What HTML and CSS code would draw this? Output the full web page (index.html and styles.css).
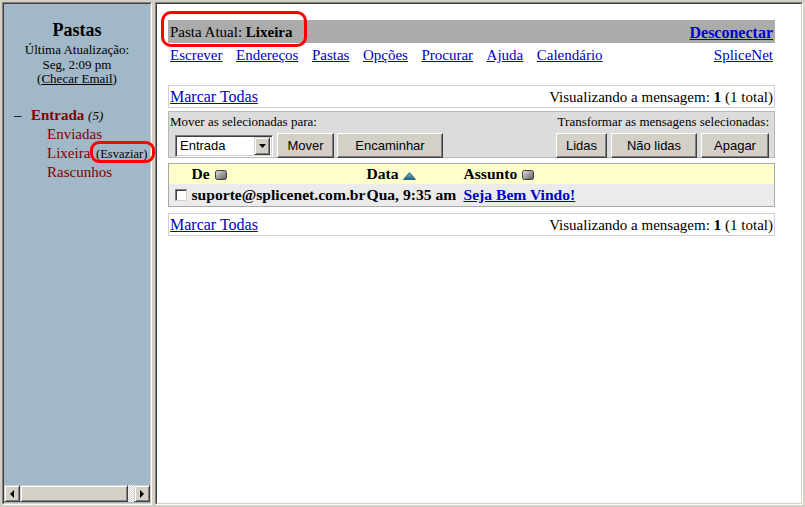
FILE: index.html
```html
<!DOCTYPE html>
<html lang="pt-BR">
<head>
<meta charset="utf-8">
<title>SquirrelMail - Lixeira</title>
<link rel="stylesheet" href="styles.css">
</head>
<body>
<div class="screen">
  <div class="frame left">
    <div class="frame-inner left-inner">
      <div class="left-body">
        <div class="left-head">
          <div class="title">Pastas</div>
          <div class="small">Última Atualização:</div>
          <div class="small">Seg, 2:09 pm</div>
          <div class="small">(<a class="plain-link" href="#">Checar Email</a>)</div>
        </div>
        <ul class="folders">
          <li class="folder inbox"><span class="dash">–</span><a class="folder-link strong" href="#">Entrada</a> <span class="count">(5)</span></li>
          <li class="folder sub"><a class="folder-link" href="#">Enviadas</a></li>
          <li class="folder sub"><a class="folder-link" href="#">Lixeira</a> <span class="small empty">(Esvaziar)</span></li>
          <li class="folder sub"><a class="folder-link" href="#">Rascunhos</a></li>
        </ul>
      </div>
      <div class="hscroll">
        <div class="sb-btn"><svg width="6" height="8" viewBox="0 0 6 8"><polygon points="5,0 5,8 1,4" fill="#000"/></svg></div>
        <div class="sb-thumb"></div>
        <div class="sb-track"></div>
        <div class="sb-btn"><svg width="6" height="8" viewBox="0 0 6 8"><polygon points="1,0 1,8 5,4" fill="#000"/></svg></div>
      </div>
    </div>
  </div>
  <div class="frame right">
    <div class="frame-inner right-inner">
      <div class="titlebar">
        <span>Pasta Atual: <b>Lixeira</b></span>
        <a class="logout" href="#">Desconectar</a>
      </div>
      <div class="nav">
        <div class="nav-links">
          <a href="#">Escrever</a>
          <a href="#">Endereços</a>
          <a href="#">Pastas</a>
          <a href="#">Opções</a>
          <a href="#">Procurar</a>
          <a href="#">Ajuda</a>
          <a href="#">Calendário</a>
        </div>
        <a href="#">SpliceNet</a>
      </div>

      <div class="box pager">
        <a class="mark-all" href="#">Marcar Todas</a>
        <span>Visualizando a mensagem: <b class="num">1</b> (1 total)</span>
      </div>

      <div class="box tools">
        <div class="tool-group">
          <div class="small tool-label">Mover as selecionadas para:</div>
          <div class="controls">
            <div class="select">
              <span class="select-text">Entrada</span>
              <span class="drop"><svg width="7" height="4" viewBox="0 0 7 4"><polygon points="0,0 7,0 3.5,4" fill="#000"/></svg></span>
            </div>
            <button class="btn btn-move">Mover</button>
            <button class="btn btn-fwd">Encaminhar</button>
          </div>
        </div>
        <div class="tool-group tool-right">
          <div class="small tool-label">Transformar as mensagens selecionadas:</div>
          <div class="controls">
            <button class="btn btn-read">Lidas</button>
            <button class="btn btn-unread">Não lidas</button>
            <button class="btn btn-del">Apagar</button>
          </div>
        </div>
      </div>

      <table class="msgs">
        <colgroup>
          <col class="c-check">
          <col class="c-from">
          <col class="c-date">
          <col>
        </colgroup>
        <tr class="head">
          <td></td>
          <td>De <svg class="ico" width="12" height="10" viewBox="0 0 12 10"><defs><linearGradient id="g1" x1="0" y1="0" x2="1" y2="1"><stop offset="0" stop-color="#e4e4e4"/><stop offset="1" stop-color="#5a5a5a"/></linearGradient></defs><rect x="0.5" y="0.5" width="11" height="9" rx="2" fill="url(#g1)" stroke="#3c3c3c"/></svg></td>
          <td>Data <svg class="ico" width="13" height="8" viewBox="0 0 13 8"><defs><linearGradient id="g2" x1="0" y1="0" x2="0" y2="1"><stop offset="0" stop-color="#7cc0d8"/><stop offset="1" stop-color="#21607e"/></linearGradient></defs><polygon points="6.5,0.5 12.5,7.5 0.5,7.5" fill="url(#g2)" stroke="#2a6680"/></svg></td>
          <td>Assunto <svg class="ico" width="12" height="10" viewBox="0 0 12 10"><rect x="0.5" y="0.5" width="11" height="9" rx="2" fill="url(#g1)" stroke="#3c3c3c"/></svg></td>
        </tr>
        <tr class="row">
          <td><span class="check"></span></td>
          <td>suporte@splicenet.com.br</td>
          <td>Qua, 9:35 am</td>
          <td><a href="#">Seja Bem Vindo!</a></td>
        </tr>
      </table>

      <div class="box pager pager-bottom">
        <a class="mark-all" href="#">Marcar Todas</a>
        <span>Visualizando a mensagem: <b class="num">1</b> (1 total)</span>
      </div>
    </div>
  </div>
</div>
<div class="mark mark-folder"></div>
<div class="mark mark-empty"></div>
</body>
</html>
```
FILE: styles.css
```css
* { box-sizing: border-box; }
html, body { margin: 0; padding: 0; }
body {
  width: 805px;
  height: 507px;
  overflow: hidden;
  position: relative;
  background: #d4d0c8;
  font-family: "Liberation Serif", "Times New Roman", serif;
  font-size: 15px;
  color: #000;
}
a { color: #0000cc; }

.screen {
  display: flex;
  gap: 3px;
  padding: 2px;
  height: 507px;
}
.frame {
  height: 503px;
  border: 1px solid;
  border-color: #808080 #ffffff #ffffff #808080;
}
.frame-inner {
  height: 100%;
  border: 1px solid;
  border-color: #404040 #d4d0c8 #d4d0c8 #404040;
}
.left { width: 150px; }
.right { width: 648px; }

/* ---------- left frame ---------- */
.left-inner {
  background: #a1b8c9;
  display: flex;
  flex-direction: column;
}
.left-body { flex: 1; padding-top: 14px; }
.left-head { text-align: center; }
.title { font-weight: bold; font-size: 18px; line-height: 24px; }
.small { font-size: 13px; line-height: 14.5px; }
.left-head .small:nth-child(2) { padding-top: 1px; }
.plain-link { color: #000; }

.folders {
  list-style: none;
  margin: 19px 0 0;
  padding: 0;
}
.folder { line-height: 18.6px; white-space: nowrap; }
.inbox { padding-left: 10px; }
.dash { display: inline-block; width: 17px; }
.sub { padding-left: 43px; }
.folder-link { color: #800000; text-decoration: none; }
.strong { font-weight: bold; }
.count { font-size: 13px; font-style: italic; }
.empty { line-height: 18.6px; font-size: 12.5px; margin-left: 2px; }

.hscroll {
  height: 17px;
  display: flex;
  margin-bottom: 1px;
}
.sb-btn {
  width: 16px;
  background: #d4d0c8;
  border: 1px solid;
  border-color: #d4d0c8 #404040 #404040 #d4d0c8;
  box-shadow: inset 1px 1px #fff, inset -1px -1px #808080;
  display: flex;
  align-items: center;
  justify-content: center;
}
.sb-thumb {
  width: 108px;
  background: #d4d0c8;
  border: 1px solid;
  border-color: #d4d0c8 #404040 #404040 #d4d0c8;
  box-shadow: inset 1px 1px #fff, inset -1px -1px #808080;
}
.sb-track {
  flex: 1;
  background: repeating-conic-gradient(#ffffff 0 25%, #d4d0c8 0 50%) 0 0 / 2px 2px;
}

/* ---------- right frame ---------- */
.right-inner {
  background: #fff;
  padding: 16px 26px 0 11px;
}
.titlebar {
  background: #ababab;
  height: 23px;
  line-height: 23px;
  padding: 1px 2px 0;
  display: flex;
  justify-content: space-between;
}
.logout { font-weight: bold; font-size: 16px; }
.nav {
  display: flex;
  justify-content: space-between;
  line-height: 20px;
  padding: 2px 2px 0;
}
.nav-links { display: flex; gap: 13.5px; }

.box {
  border: 1px solid #cfcfcf;
}
.pager {
  margin-top: 20px;
  height: 23px;
  line-height: 21px;
  padding: 0 1px;
  display: flex;
  justify-content: space-between;
}
.mark-all { font-size: 16px; }
.pager-bottom { margin-top: 6px; }
.num { font-size: 15.5px; }

.tools {
  margin-top: 3px;
  height: 47px;
  background: #dcdcdc;
  border-color: #b8b8b8;
  display: flex;
  justify-content: space-between;
  padding: 2px 5px 0 1px;
}
.tool-label { line-height: 16px; height: 17px; }
.tool-right { text-align: right; }
.controls {
  display: flex;
  align-items: center;
  gap: 3px;
  margin-top: 2px;
  height: 25px;
}
.tool-right .controls { justify-content: flex-end; gap: 4px; }

.select {
  margin-left: 5px;
  margin-right: 1px;
  width: 98px;
  height: 22px;
  background: #fff;
  border: 1px solid;
  border-color: #808080 #fff #fff #808080;
  box-shadow: inset 1px 1px #404040, inset -1px -1px #d4d0c8;
  display: flex;
  align-items: center;
  justify-content: space-between;
  padding: 2px 2px 2px 4px;
  font-family: "Liberation Sans", Arial, sans-serif;
  font-size: 13px;
}
.drop {
  width: 16px;
  height: 18px;
  background: #d4d0c8;
  border: 1px solid;
  border-color: #d4d0c8 #404040 #404040 #d4d0c8;
  box-shadow: inset 1px 1px #fff, inset -1px -1px #808080;
  display: flex;
  align-items: center;
  justify-content: center;
}

.btn {
  height: 25px;
  margin: 0;
  background: #d4d0c8;
  border: 1px solid;
  border-color: #fff #404040 #404040 #fff;
  box-shadow: inset -1px -1px #808080;
  font-family: "Liberation Sans", Arial, sans-serif;
  font-size: 13px;
  color: #000;
  padding: 0 9px;
}
.btn-move { width: 57px; }
.btn-fwd { width: 106px; }
.btn-read { width: 51px; }
.btn-unread { width: 86px; }
.btn-del { width: 68px; }

.msgs {
  margin-top: 5px;
  width: 100%;
  border-collapse: collapse;
  table-layout: fixed;
  border: 1px solid #a8a8a8;
  font-weight: bold;
  font-size: 15.6px;
  white-space: nowrap;
}
.c-check { width: 22px; }
.c-from { width: 175px; }
.c-date { width: 97px; }
.msgs td { padding: 0 0 0 1px; overflow: visible; }
.head td { background: #ffffcc; height: 20px; }
.row td { background: #ebebeb; height: 23px; }
.ico { vertical-align: -1px; margin-left: 1px; }
.check {
  display: inline-block;
  width: 12px;
  height: 12px;
  margin: 2px 0 0 5px;
  vertical-align: -1px;
  background: #fff;
  border: 1px solid;
  border-color: #808080 #d4d0c8 #d4d0c8 #808080;
  box-shadow: inset 1px 1px #404040;
}

/* ---------- red annotations ---------- */
.mark {
  position: absolute;
  border: 3px solid #ff0000;
  border-radius: 10px;
}
.mark-folder { left: 161px; top: 11px; width: 146px; height: 36px; }
.mark-empty { left: 90px; top: 141px; width: 65px; height: 22px; border-radius: 9px; }
```
